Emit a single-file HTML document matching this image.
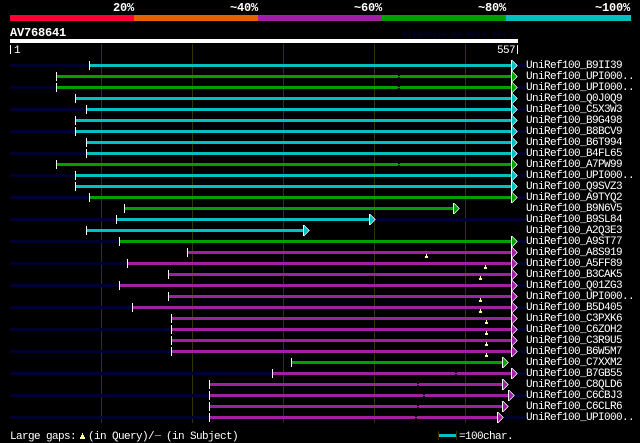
<!DOCTYPE html>
<html><head><meta charset="utf-8"><title>AV768641</title>
<style>
html,body{margin:0;padding:0;background:#000;width:640px;height:443px;overflow:hidden}
svg{display:block}
text{font-family:"Liberation Mono",monospace;fill:#fff;font-size:11px;letter-spacing:-.6px}
.b{font-weight:bold;font-size:12px;letter-spacing:-.2px}
.t{shape-rendering:crispEdges}
</style></head><body>
<svg width="640" height="443" viewBox="0 0 640 443" xmlns="http://www.w3.org/2000/svg">
<rect width="640" height="443" fill="#000"/>
<!-- header bar -->
<rect x="10" y="15" width="124" height="6" fill="#ff0033"/>
<rect x="134" y="15" width="124" height="6" fill="#e66000"/>
<rect x="258" y="15" width="124" height="6" fill="#a020a0"/>
<rect x="382" y="15" width="124" height="6" fill="#00a000"/>
<rect x="506" y="15" width="125" height="6" fill="#00c0c0"/>
<text class="b" x="113" y="11">20%</text>
<text class="b" x="230" y="11">~40%</text>
<text class="b" x="354" y="11">~60%</text>
<text class="b" x="478" y="11">~80%</text>
<text class="b" x="595" y="11">~100%</text>
<text class="b" x="10" y="36">AV768641</text>
<text x="402" y="37" style="fill:#000033;font-size:8.3px;letter-spacing:0;font-weight:bold">AlignView.pm Beta rel.7</text>
<rect x="10" y="39" width="508" height="4" fill="#fff"/>
<rect x="10" y="45" width="1" height="9" fill="#fff"/>
<rect x="517" y="45" width="1" height="9" fill="#fff"/>
<text x="14" y="53">1</text>
<text x="497" y="53">557</text>
<!-- grid -->
<path fill="#333300" d="M101 44h1v379h-1zM192 44h1v379h-1zM283 44h1v379h-1zM374 44h1v379h-1zM465 44h1v379h-1z"/>
<!-- navy -->
<path fill="#000033" d="M10 64h516v3h-516zM10 86h516v3h-516zM10 108h516v3h-516zM10 130h516v3h-516zM10 152h516v3h-516zM10 174h516v3h-516zM10 196h516v3h-516zM10 218h516v3h-516zM10 240h516v3h-516zM10 262h516v3h-516zM10 284h516v3h-516zM10 306h516v3h-516zM10 328h516v3h-516zM10 350h516v3h-516zM10 372h516v3h-516zM10 394h516v3h-516zM10 416h516v3h-516z"/>
<!-- cyan bars -->
<path fill="#00c0c0" d="M90 64H511v3H90zM76 97H511v3H76zM87 108H511v3H87zM76 119H511v3H76zM76 130H511v3H76zM87 141H511v3H87zM87 152H511v3H87zM76 174H511v3H76zM76 185H511v3H76zM117 218H369v3H117zM87 229H303v3H87z"/>
<!-- green bars -->
<path fill="#00a000" d="M57 75H511v3H57zM57 86H511v3H57zM57 163H511v3H57zM90 196H511v3H90zM125 207H453v3H125zM120 240H511v3H120zM292 361H502v3H292z"/>
<!-- purple bars -->
<path fill="#a020a0" d="M188 251H511v3H188zM128 262H511v3H128zM169 273H511v3H169zM120 284H511v3H120zM169 295H511v3H169zM133 306H511v3H133zM172 317H511v3H172zM172 328H511v3H172zM172 339H511v3H172zM172 350H511v3H172zM273 372H511v3H273zM210 383H502v3H210zM210 394H508v3H210zM210 405H502v3H210zM210 416H497v3H210z"/>
<!-- arrow heads: white outline -->
<path class="t" fill="#fff" d="M512 60l6 5.5-6 5.5zM512 71l6 5.5-6 5.5zM512 82l6 5.5-6 5.5zM512 93l6 5.5-6 5.5zM512 104l6 5.5-6 5.5zM512 115l6 5.5-6 5.5zM512 126l6 5.5-6 5.5zM512 137l6 5.5-6 5.5zM512 148l6 5.5-6 5.5zM512 159l6 5.5-6 5.5zM512 170l6 5.5-6 5.5zM512 181l6 5.5-6 5.5zM512 192l6 5.5-6 5.5zM454 203l6 5.5-6 5.5zM370 214l6 5.5-6 5.5zM304 225l6 5.5-6 5.5zM512 236l6 5.5-6 5.5zM512 247l6 5.5-6 5.5zM512 258l6 5.5-6 5.5zM512 269l6 5.5-6 5.5zM512 280l6 5.5-6 5.5zM512 291l6 5.5-6 5.5zM512 302l6 5.5-6 5.5zM512 313l6 5.5-6 5.5zM512 324l6 5.5-6 5.5zM512 335l6 5.5-6 5.5zM512 346l6 5.5-6 5.5zM503 357l6 5.5-6 5.5zM512 368l6 5.5-6 5.5zM503 379l6 5.5-6 5.5zM509 390l6 5.5-6 5.5zM503 401l6 5.5-6 5.5zM498 412l6 5.5-6 5.5z"/>
<!-- arrow heads: fills -->
<path class="t" fill="#00c0c0" d="M512 61l5 4.5-5 4.5zM512 94l5 4.5-5 4.5zM512 105l5 4.5-5 4.5zM512 116l5 4.5-5 4.5zM512 127l5 4.5-5 4.5zM512 138l5 4.5-5 4.5zM512 149l5 4.5-5 4.5zM512 171l5 4.5-5 4.5zM512 182l5 4.5-5 4.5zM370 215l5 4.5-5 4.5zM304 226l5 4.5-5 4.5z"/>
<path class="t" fill="#00a000" d="M512 72l5 4.5-5 4.5zM512 83l5 4.5-5 4.5zM512 160l5 4.5-5 4.5zM512 193l5 4.5-5 4.5zM454 204l5 4.5-5 4.5zM512 237l5 4.5-5 4.5zM503 358l5 4.5-5 4.5z"/>
<path class="t" fill="#a020a0" d="M512 248l5 4.5-5 4.5zM512 259l5 4.5-5 4.5zM512 270l5 4.5-5 4.5zM512 281l5 4.5-5 4.5zM512 292l5 4.5-5 4.5zM512 303l5 4.5-5 4.5zM512 314l5 4.5-5 4.5zM512 325l5 4.5-5 4.5zM512 336l5 4.5-5 4.5zM512 347l5 4.5-5 4.5zM512 369l5 4.5-5 4.5zM503 380l5 4.5-5 4.5zM509 391l5 4.5-5 4.5zM503 402l5 4.5-5 4.5zM498 413l5 4.5-5 4.5z"/>
<!-- gaps -->
<path fill="#000" d="M398 75h2v1h-2zM398 77h2v1h-2zM398 86h2v1h-2zM398 88h2v1h-2zM398 163h2v1h-2zM398 165h2v1h-2zM455 372h2v1h-2zM455 374h2v1h-2zM417 383h2v1h-2zM417 385h2v1h-2zM423 394h2v1h-2zM423 396h2v1h-2zM417 405h2v1h-2zM417 407h2v1h-2zM415 416h2v1h-2zM415 418h2v1h-2z"/>
<!-- start ticks + end ticks -->
<path fill="#fff" d="M89 61h1v9h-1zM56 72h1v9h-1zM56 83h1v9h-1zM75 94h1v9h-1zM86 105h1v9h-1zM75 116h1v9h-1zM75 127h1v9h-1zM86 138h1v9h-1zM86 149h1v9h-1zM56 160h1v9h-1zM75 171h1v9h-1zM75 182h1v9h-1zM89 193h1v9h-1zM124 204h1v9h-1zM116 215h1v9h-1zM86 226h1v9h-1zM119 237h1v9h-1zM187 248h1v9h-1zM127 259h1v9h-1zM168 270h1v9h-1zM119 281h1v9h-1zM168 292h1v9h-1zM132 303h1v9h-1zM171 314h1v9h-1zM171 325h1v9h-1zM171 336h1v9h-1zM171 347h1v9h-1zM291 358h1v9h-1zM272 369h1v9h-1zM209 380h1v9h-1zM209 391h1v9h-1zM209 402h1v9h-1zM209 413h1v9h-1z
M511 60h1v11h-1zM511 71h1v11h-1zM511 82h1v11h-1zM511 93h1v11h-1zM511 104h1v11h-1zM511 115h1v11h-1zM511 126h1v11h-1zM511 137h1v11h-1zM511 148h1v11h-1zM511 159h1v11h-1zM511 170h1v11h-1zM511 181h1v11h-1zM511 192h1v11h-1zM453 203h1v11h-1zM369 214h1v11h-1zM303 225h1v11h-1zM511 236h1v11h-1zM511 247h1v11h-1zM511 258h1v11h-1zM511 269h1v11h-1zM511 280h1v11h-1zM511 291h1v11h-1zM511 302h1v11h-1zM511 313h1v11h-1zM511 324h1v11h-1zM511 335h1v11h-1zM511 346h1v11h-1zM502 357h1v11h-1zM511 368h1v11h-1zM502 379h1v11h-1zM508 390h1v11h-1zM502 401h1v11h-1zM497 412h1v11h-1z"/>
<!-- yellow gap markers -->
<path fill="#ffff99" d="M426 254h1v2h-1zM425 256h3v2h-3zM485 265h1v2h-1zM484 267h3v2h-3zM480 276h1v2h-1zM479 278h3v2h-3zM480 298h1v2h-1zM479 300h3v2h-3zM480 309h1v2h-1zM479 311h3v2h-3zM486 320h1v2h-1zM485 322h3v2h-3zM486 331h1v2h-1zM485 333h3v2h-3zM486 342h1v2h-1zM485 344h3v2h-3zM486 353h1v2h-1zM485 355h3v2h-3zM82 433h1v2h-1zM81 435h3v2h-3zM80 437h5v2h-5z"/>
<!-- labels -->
<text x="526" y="68">UniRef100_B9II39</text>
<text x="526" y="79">UniRef100_UPI000..</text>
<text x="526" y="90">UniRef100_UPI000..</text>
<text x="526" y="101">UniRef100_Q0J0Q9</text>
<text x="526" y="112">UniRef100_C5X3W3</text>
<text x="526" y="123">UniRef100_B9G498</text>
<text x="526" y="134">UniRef100_B8BCV9</text>
<text x="526" y="145">UniRef100_B6T994</text>
<text x="526" y="156">UniRef100_B4FL65</text>
<text x="526" y="167">UniRef100_A7PW99</text>
<text x="526" y="178">UniRef100_UPI000..</text>
<text x="526" y="189">UniRef100_Q9SVZ3</text>
<text x="526" y="200">UniRef100_A9TYQ2</text>
<text x="526" y="211">UniRef100_B9N6V5</text>
<text x="526" y="222">UniRef100_B9SL84</text>
<text x="526" y="233">UniRef100_A2Q3E3</text>
<text x="526" y="244">UniRef100_A9ST77</text>
<text x="526" y="255">UniRef100_A8S919</text>
<text x="526" y="266">UniRef100_A5FF89</text>
<text x="526" y="277">UniRef100_B3CAK5</text>
<text x="526" y="288">UniRef100_Q01ZG3</text>
<text x="526" y="299">UniRef100_UPI000..</text>
<text x="526" y="310">UniRef100_B5D405</text>
<text x="526" y="321">UniRef100_C3PXK6</text>
<text x="526" y="332">UniRef100_C6ZOH2</text>
<text x="526" y="343">UniRef100_C3R9U5</text>
<text x="526" y="354">UniRef100_B6W5M7</text>
<text x="526" y="365">UniRef100_C7XXM2</text>
<text x="526" y="376">UniRef100_B7GB55</text>
<text x="526" y="387">UniRef100_C8QLD6</text>
<text x="526" y="398">UniRef100_C6CBJ3</text>
<text x="526" y="409">UniRef100_C6CLR6</text>
<text x="526" y="420">UniRef100_UPI000..</text>
<!-- footer -->
<text x="10" y="439">Large gaps:</text>
<text x="88" y="439">(in Query)/</text>
<rect x="155" y="435" width="6" height="1" fill="#00c0c0"/>
<text x="166" y="439">(in Subject)</text>
<path fill="#333300" d="M438 431h1v9h-1zM456 431h1v9h-1z"/>
<rect x="439" y="434" width="17" height="3" fill="#00c0c0"/>
<text x="459" y="439">=100char.</text>
</svg>
</body></html>
